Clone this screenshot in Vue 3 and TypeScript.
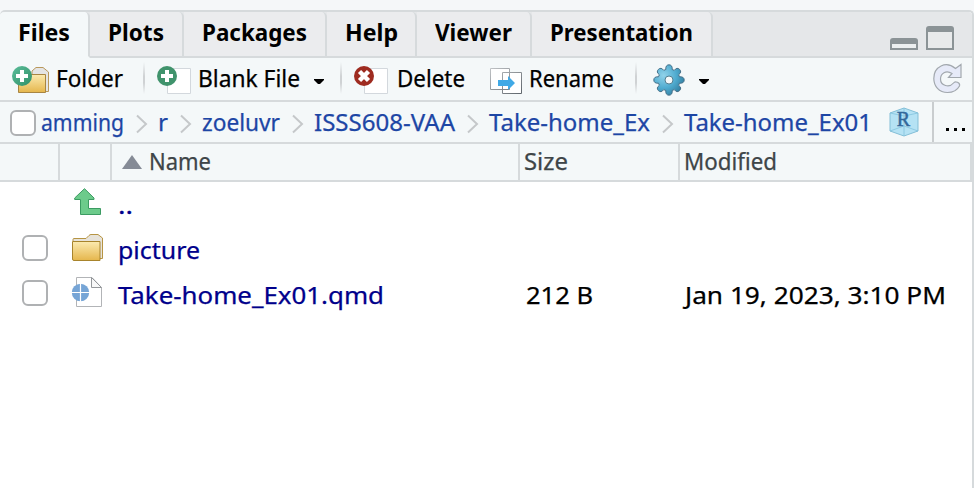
<script setup lang="ts">
import { type Directive } from 'vue'

interface Tab { label: string; width: number; text: number }
interface Crumb { label: string; text: number }
interface Entry { kind: 'folder' | 'document'; name: string; text: number; size?: string; modified?: string }

const tabs: Tab[] = [
  { label: 'Files', width: 90, text: 52 },
  { label: 'Plots', width: 94, text: 56 },
  { label: 'Packages', width: 143, text: 105 },
  { label: 'Help', width: 90, text: 53 },
  { label: 'Viewer', width: 115, text: 77 },
  { label: 'Presentation', width: 181, text: 143 },
]

const crumbs: Crumb[] = [
  { label: 'amming', text: 83 },
  { label: 'r', text: 10 },
  { label: 'zoeluvr', text: 78 },
  { label: 'ISSS608-VAA', text: 141 },
  { label: 'Take-home_Ex', text: 161 },
  { label: 'Take-home_Ex01', text: 188 },
]

const entries: Entry[] = [
  { kind: 'folder', name: 'picture', text: 82 },
  { kind: 'document', name: 'Take-home_Ex01.qmd', text: 266, size: '212 B', modified: 'Jan 19, 2023, 3:10 PM' },
]

// Stretches a label horizontally so it takes exactly the given width.
const vFit: Directive<HTMLElement, number> = {
  mounted(el, { value }) {
    const natural = el.getBoundingClientRect().width
    el.style.width = `${value}px`
    el.style.transform = `scaleX(${value / natural})`
  },
}
</script>

<template>
  <main class="pane">
    <nav class="tabs">
      <button v-for="(tab, i) in tabs" :key="tab.label" class="tab" :class="{ active: i === 0 }" :style="{ width: tab.width + 'px' }">
        <span v-fit="tab.text" class="fit">{{ tab.label }}</span>
      </button>
      <div class="window-controls">
        <svg width="28" height="12" viewBox="0 0 28 12"><path d="M0 12V3Q0 0 3 0H25Q28 0 28 3V12Z" fill="#8b9396" /><path d="M2 6H26V10H2Z" fill="#eceff0" /></svg>
        <svg width="28" height="24" viewBox="0 0 28 24"><path d="M0 24V3Q0 0 3 0H25Q28 0 28 3V24Z" fill="#8b9396" /><path d="M2 6H26V22H2Z" fill="#e8eaeb" /></svg>
      </div>
    </nav>

    <div class="toolbar">
      <button class="tool new-folder">
        <svg width="38" height="30" viewBox="0 0 38 30">
          <defs>
            <linearGradient id="gold" x2="0" y2="1"><stop stop-color="#fbeab0" /><stop offset="1" stop-color="#e5b64c" /></linearGradient>
            <linearGradient id="green" x2="1" y2="1"><stop stop-color="#5abd9a" /><stop offset="1" stop-color="#319068" /></linearGradient>
          </defs>
          <path d="M20 8V5L24 1.500H31L36.500 6V25.500H32" fill="#e4e4e4" stroke="#b9985b" />
          <path d="M6.500 10.500Q6.500 8.500 8.500 8.500H33.500V26.500H6.500Z" fill="url(#gold)" stroke="#a88542" />
          <circle cx="10" cy="10" r="10" fill="url(#green)" /><path d="M10 4V16M4 10H16" stroke="#fff" stroke-width="4" />
        </svg>
        <span v-fit="67" class="fit">Folder</span>
      </button>
      <i class="divider" />
      <button class="tool new-file">
        <svg width="36" height="30" viewBox="0 0 36 30">
          <path d="M10.500 2.500H33.500V27.500H10.500Z" fill="#fff" stroke="#d3d8dd" />
          <circle cx="10" cy="10" r="10" fill="#40936c" /><path d="M10 4V16M4 10H16" stroke="#fff" stroke-width="4" />
        </svg>
        <span v-fit="102" class="fit">Blank File</span>
        <svg class="caret" width="10" height="6" viewBox="0 0 10 6"><path d="M0 0H10V1L6 5H4L0 1Z" /></svg>
      </button>
      <i class="divider" />
      <button class="tool delete">
        <svg width="36" height="30" viewBox="0 0 36 30">
          <path d="M10.500 2.500H33.500V27.500H10.500Z" fill="#fff" stroke="#d3d8dd" />
          <circle cx="10" cy="10" r="10" fill="#9e2b20" /><path d="M5.500 5.500L14.500 14.500M14.500 5.500L5.500 14.500" stroke="#fff" stroke-width="4.500" />
        </svg>
        <span v-fit="68" class="fit">Delete</span>
      </button>
      <button class="tool rename">
        <svg width="32" height="26" viewBox="0 0 32 26">
          <defs><linearGradient id="edge" x2="1" y2="1"><stop stop-color="#bfc2c5" /><stop offset="1" stop-color="#5f666c" /></linearGradient></defs>
          <path d="M.5 .5H19.500V21.500H.5ZM12.500 4.500H31.500V25.500H12.500Z" fill="#fff" stroke="url(#edge)" />
          <path d="M8 12H18V8L25 15L18 22V18H8Z" fill="#40a9e6" />
        </svg>
        <span v-fit="85" class="fit">Rename</span>
      </button>
      <i class="divider" />
      <button class="tool more">
        <svg width="32" height="32" viewBox="0 0 32 32">
          <defs><radialGradient id="blue" cx=".32" cy=".35" r=".75"><stop stop-color="#91d2e9" /><stop offset=".55" stop-color="#50acd0" /><stop offset="1" stop-color="#307d9f" /></radialGradient></defs>
          <path d="M12.800 5.500Q12.400 1 16 .8Q19.600 1 19.200 5.500Q20.200 5.800 21.200 6.400Q24 2.800 26.600 5.400Q29.200 8 25.600 10.800Q26.200 11.800 26.500 12.800Q31 12.400 31.200 16Q31 19.600 26.500 19.200Q26.200 20.200 25.600 21.200Q29.200 24 26.600 26.600Q24 29.200 21.200 25.600Q20.200 26.200 19.200 26.500Q19.600 31 16 31.200Q12.400 31 12.800 26.500Q11.800 26.200 10.800 25.600Q8 29.200 5.400 26.600Q2.800 24 6.400 21.200Q5.800 20.200 5.500 19.200Q1 19.600 .8 16Q1 12.400 5.500 12.800Q5.800 11.800 6.400 10.800Q2.800 8 5.400 5.400Q8 2.800 10.800 6.400Q11.800 5.800 12.800 5.500Z" fill="url(#blue)" stroke="#456f88" />
          <circle cx="16" cy="16" r="4" fill="#f4f8f9" stroke="#527e91" />
        </svg>
        <svg class="caret" width="10" height="6" viewBox="0 0 10 6"><path d="M0 0H10V1L6 5H4L0 1Z" /></svg>
      </button>
      <svg class="refresh" width="30" height="31" viewBox="0 0 30 31">
        <path d="M22.500 5.500L28 1.500V14.500H15.500L19 10.500C13 6.500 7.500 10.500 7.500 16C7.500 23 16.500 25 20.500 20C22 17.500 27.500 19.500 26.500 23C24 27.500 19 29.500 14.500 29.500C6 29.500 .8 23 .8 15.500C.8 3.500 13-2.500 22.500 5.500Z" fill="#e6eaf8" stroke="#a2a8ae" stroke-width="1.200" />
      </svg>
    </div>

    <div class="path">
      <span class="check" />
      <div class="crumbs">
        <template v-for="(crumb, i) in crumbs" :key="crumb.label">
          <svg v-if="i" class="chevron" width="11" height="18" viewBox="0 0 11 18"><path d="M1 .5L10 9L1 17.500" fill="none" stroke="#c5c8ca" stroke-width="2" /></svg>
          <a class="crumb"><span v-fit="crumb.text" class="fit">{{ crumb.label }}</span></a>
        </template>
      </div>
      <svg class="project" width="30" height="30" viewBox="0 0 30 30">
        <path d="M1 6L15 1L29 6V24L15 29L1 24Z" fill="#b5e2f4" stroke="#84bfd7" />
        <path d="M1 6L15 9L29 6M15 9V29M1 24L15 19L29 24M15 1V9" fill="none" stroke="#83c3dd" stroke-width=".8" />
        <text x="14.500" y="19" text-anchor="middle" class="cube-letter">R</text>
      </svg>
      <button class="browse"><i /><i /><i /></button>
    </div>

    <div class="columns">
      <div class="col-check" />
      <div class="col-icon" />
      <div class="col-name">
        <svg width="20" height="14" viewBox="0 0 20 14"><path d="M10 0L20 14H0Z" fill="#858b96" /></svg>
        <span v-fit="62" class="fit">Name</span>
      </div>
      <div class="col-size"><span v-fit="44" class="fit">Size</span></div>
      <div class="col-modified"><span v-fit="93" class="fit">Modified</span></div>
    </div>

    <section class="list">
      <div class="row">
        <span class="cell-check" />
        <span class="cell-icon">
          <svg class="up" width="27" height="27" viewBox="0 0 27 27">
            <path d="M10.500 .7L20 10V11.500H14.500V20.500H26.500V26.500H6.500V11.500H.7V10Z" fill="#6ccb8b" stroke="#3c9b62" />
          </svg>
        </span>
        <a class="cell-name"><span v-fit="15" class="fit">..</span></a>
      </div>
      <div v-for="entry in entries" :key="entry.name" class="row">
        <span class="cell-check"><span class="check" /></span>
        <span class="cell-icon">
          <svg v-if="entry.kind === 'folder'" class="folder" width="32" height="27" viewBox="0 0 32 27">
            <path d="M1 7V5.500Q1 4.500 2 4.500H14L17 1.500Q18 .5 19 .5H26L30.500 4V24.500H28" fill="#e7e3da" stroke="#b69443" />
            <path d="M.5 7.500H28V26.500H2Q.5 26.500 .5 25Z" fill="url(#gold)" stroke="#a8842c" />
          </svg>
          <svg v-else class="doc" width="31" height="31" viewBox="0 0 31 31">
            <path d="M4.500 .5H20L29.500 10.500V29.500H4.500Z" fill="#fff" stroke="#b2b4b7" />
            <path d="M19.500 .5V10.500H29.500Z" fill="#f8f8f8" stroke="#94979a" />
            <circle cx="8.500" cy="15.500" r="8.700" fill="#76a5d6" /><path d="M8.500 6V25M-1 15.500H18" stroke="#fff" stroke-width="1.200" />
          </svg>
        </span>
        <a class="cell-name"><span v-fit="entry.text" class="fit">{{ entry.name }}</span></a>
        <span class="cell-size"><span v-if="entry.size" v-fit="67" class="fit">{{ entry.size }}</span></span>
        <span class="cell-modified"><span v-if="entry.modified" v-fit="261" class="fit">{{ entry.modified }}</span></span>
      </div>
    </section>
  </main>
</template>

<style>
body { background: #f5f7f9; }
</style>

<style scoped>
* { box-sizing: border-box; }
.pane { width: 974px; height: 478px; margin-top: 10px; border-top: 2px solid #d6dadc; border-right: 2px solid #d6dadc; border-radius: 5px 5px 0 0; background: #fff; display: flex; flex-direction: column; overflow: hidden; font: 23px/30px "Noto Sans", sans-serif; color: #000; }
button { border: 0; margin: 0; padding: 0; background: none; font: inherit; color: inherit; text-align: left; }
svg { display: block; flex: none; overflow: visible; }
.fit { display: inline-block; flex: none; white-space: nowrap; transform-origin: 0 50%; -webkit-text-stroke: .25px currentColor; }
.tabs { height: 46px; display: flex; flex: none; background: #e5e7e9; }
.tab { flex: none; border-right: 2px solid #d6dadc; border-bottom: 2px solid #d6dadc; border-top-right-radius: 5px; background: #ebecee; padding: 5px 0 0 18px; display: flex; font-weight: 700; }
.tab .fit { -webkit-text-stroke: 0; }
.tab.active { background: #f4f8f9; border-bottom-color: #f4f8f9; }
.window-controls { flex: 1; border-bottom: 2px solid #d6dadc; display: flex; gap: 8px; justify-content: flex-end; align-items: flex-end; padding: 0 18px 6px 0; }
.toolbar { height: 44px; flex: none; background: #f4f8f9; border-bottom: 2px solid #d6dadc; display: flex; }
.tool { display: flex; align-items: flex-start; flex: none; }
.tool .fit { margin-top: 5px; }
.tool svg { margin-top: 8px; }
.tool .caret { margin-top: 21px; }
.divider { width: 2px; height: 32px; margin-top: 4px; background: linear-gradient(#f4f8f9, #cfd2d4 45%, #cfd2d4 65%, #f4f8f9); }
.new-folder { width: 143px; padding-left: 12px; gap: 6px; }
.new-file { width: 195px; padding-left: 12px; gap: 4px; }
.new-file .fit { margin-left: 1px; margin-right: 10px; }
.delete { width: 137px; padding-left: 12px; gap: 7px; }
.rename { width: 156px; padding-left: 11px; gap: 7px; }
.rename svg { margin-top: 10px; }
.more { padding-left: 16px; gap: 14px; }
.more svg { margin-top: 6px; }
.refresh { margin: 5px 9px 0 auto; }
.path { height: 42px; flex: none; background: #f4f8f9; border-bottom: 2px solid #d6dadc; display: flex; align-items: flex-start; }
.check { display: block; width: 26px; height: 26px; border: 2px solid #afb1b3; border-radius: 6px; background: #fff; flex: none; }
.path .check { margin: 8px 5px 0 10px; }
.crumbs { display: flex; width: 833px; flex: none; color: #1d46a5; }
.crumb { display: flex; padding-top: 5px; }
.chevron { margin: 13px 11px 0 12px; }
.project { margin: 5px 0 0 15px; }
.cube-letter { font: 20px "Liberation Serif", serif; fill: #32679a; stroke: #32679a; stroke-width: .5px; }
.browse { align-self: stretch; margin-left: auto; width: 40px; border-left: 2px solid #c9cdcf; display: flex; gap: 5px; padding: 26px 0 0 12px; }
.browse i { width: 3px; height: 3px; background: #000; }
.columns { height: 38px; flex: none; border-bottom: 2px solid #d6dadc; background: #f4f8f9; display: flex; color: #3e4548; }
.columns > div { border-right: 2px solid #d6dadc; flex: none; display: flex; padding-top: 2px; }
.columns .col-check { width: 60px; }
.columns .col-icon { width: 52px; }
.columns .col-name { width: 408px; padding-left: 10px; gap: 7px; }
.col-name svg { margin-top: 9px; }
.columns .col-size { width: 160px; padding-left: 4px; }
.columns .col-modified { width: 292px; padding-left: 4px; }
.list { flex: 1; }
.row { height: 45px; display: flex; }
.cell-check { width: 72px; padding: 8px 0 0 22px; flex: none; }
.cell-icon { width: 46px; flex: none; }
.cell-name { width: 408px; flex: none; padding-top: 8px; color: #00008b; }
.cell-size { width: 159px; flex: none; padding-top: 8px; }
.cell-modified { padding-top: 8px; }
.up { margin: 6px 0 0 2px; }
.folder { margin-top: 7px; }
.doc { margin-top: 5px; }
</style>
